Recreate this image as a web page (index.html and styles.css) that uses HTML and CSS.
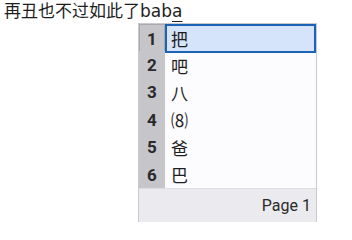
FILE: index.html
```html
<!DOCTYPE html>
<html>
<head>
<meta charset="utf-8">
<link rel="stylesheet" href="styles.css">
</head>
<body>
<div class="line">再丑也不过如此了bab<span class="pre">a</span></div>
<div class="popup">
  <div class="row sel"><div class="num">1</div><div class="cand">把</div></div>
  <div class="row"><div class="num">2</div><div class="cand">吧</div></div>
  <div class="row"><div class="num">3</div><div class="cand">八</div></div>
  <div class="row"><div class="num">4</div><div class="cand">⑻</div></div>
  <div class="row"><div class="num">5</div><div class="cand">爸</div></div>
  <div class="row"><div class="num">6</div><div class="cand">巴</div></div>
  <div class="footer">Page 1</div>
</div>
</body>
</html>
```
FILE: styles.css
```css
html, body {
  margin: 0;
  padding: 0;
  background: #ffffff;
}
body {
  font-family: "DejaVu Sans", "Noto Sans CJK SC", sans-serif;
  color: #1e1e1e;
  position: relative;
  width: 352px;
  height: 222px;
  overflow: hidden;
}
.line {
  padding-left: 4px;
  font-size: 17px;
  line-height: 22px;
  height: 22px;
}
.pre {
  text-decoration: underline;
  text-decoration-thickness: 1px;
  text-underline-offset: 4px;
  text-decoration-color: #1e1e1e;
}
.popup {
  position: absolute;
  left: 138px;
  top: 23px;
  width: 177px;
  height: 198px;
  border: 1px solid #c9c8cc;
  background: #fcfbfe;
  display: flex;
  flex-direction: column;
  font-family: Roboto, "Noto Sans CJK SC", sans-serif;
}
.row {
  display: grid;
  grid-template-columns: 26px 1fr;
  height: 27.4px;
}
.num {
  background: #c6c5c9;
  font-weight: bold;
  font-size: 17px;
  display: flex;
  align-items: center;
  justify-content: center;
  color: #2a2a2a;
}
.cand {
  display: flex;
  align-items: center;
  padding-left: 6px;
  font-family: "Noto Sans CJK SC", sans-serif;
  font-size: 17px;
  color: #1e1e1e;
}
.sel .num {
  border: 1px solid #a9a8ad;
}
.sel .cand {
  background: #d5e3fb;
  border: 2px solid #1c62b6;
  padding-left: 4px;
}
.footer {
  flex: 1;
  background: #ebeaef;
  border-top: 1px solid #dcdbe0;
  display: flex;
  align-items: center;
  justify-content: flex-end;
  padding-right: 5px;
  font-size: 16px;
  color: #2a2a2a;
}
```
